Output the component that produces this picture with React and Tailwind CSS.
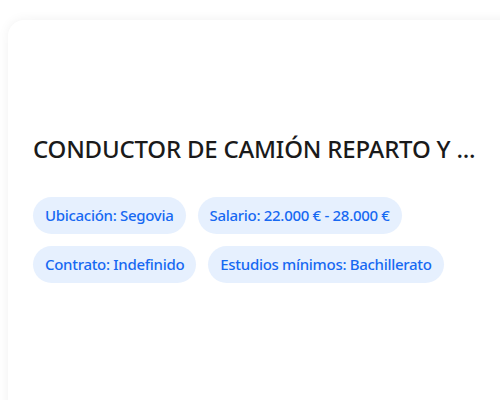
export default function App() {
  const tags = [
    ["Ubicación: Segovia", "Salario: 22.000 € - 28.000 €"],
    ["Contrato: Indefinido", "Estudios mínimos: Bachillerato"],
  ];
  return (
    <div className="w-[500px] h-[400px] overflow-hidden bg-white" style={{ fontFamily: '"Noto Sans", "Open Sans", sans-serif' }}>
      <div className="ml-2 mt-5 w-[560px] h-[420px] rounded-2xl bg-white shadow-[0_0_12px_rgba(0,0,0,0.06)] pt-[113px] px-[25px]">
        <h1 className="whitespace-nowrap text-[24px] font-medium tracking-[-0.2px] text-[#1a1a1a] leading-[32px]">
          CONDUCTOR DE CAMIÓN REPARTO Y ...
        </h1>
        <div className="mt-[32px] flex flex-col gap-3">
          {tags.map((row, i) => (
            <div key={i} className="flex gap-3">
              {row.map((t) => (
                <span key={t} className="h-[37px] flex items-center px-3 rounded-full bg-[#e6f0fe] text-[#1769f2] text-[15px] font-medium tracking-[-0.3px]">
                  {t}
                </span>
              ))}
            </div>
          ))}
        </div>
      </div>
    </div>
  );
}
